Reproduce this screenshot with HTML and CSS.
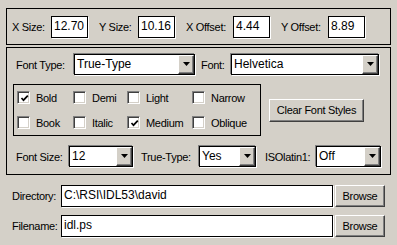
FILE: index.html
```html
<!DOCTYPE html>
<html>
<head>
<meta charset="utf-8">
<link rel="stylesheet" href="styles.css">
</head>
<body>
<div class="dialog">
  <div class="frame sizes">
    <div class="pair"><span class="lbl w39">X Size:</span><span class="field num">12.70</span></div>
    <div class="pair"><span class="lbl w39">Y Size:</span><span class="field num">10.16</span></div>
    <div class="pair"><span class="lbl w47">X Offset:</span><span class="field num">4.44</span></div>
    <div class="pair"><span class="lbl w47">Y Offset:</span><span class="field num">8.89</span></div>
  </div>

  <div class="frame fonts">
    <div class="row">
      <span class="lbl ind w58">Font Type:</span>
      <div class="combo c-type"><span class="val">True-Type</span><span class="drop"><svg width="7" height="4" viewBox="0 0 7 4"><polygon points="0,0 7,0 3.5,4" fill="#000"/></svg></span></div>
      <span class="lbl font-lbl">Font:</span>
      <div class="combo c-font"><span class="val">Helvetica</span><span class="drop"><svg width="7" height="4" viewBox="0 0 7 4"><polygon points="0,0 7,0 3.5,4" fill="#000"/></svg></span></div>
    </div>

    <div class="row styles-row">
      <div class="styles">
        <label class="chk"><span class="box on"><svg width="9" height="9" viewBox="0 0 9 9"><path d="M1.5 4 L3.5 6.2 L7.8 1.6" fill="none" stroke="#000" stroke-width="1.7"/></svg></span>Bold</label>
        <label class="chk"><span class="box"></span>Demi</label>
        <label class="chk"><span class="box"></span>Light</label>
        <label class="chk"><span class="box"></span>Narrow</label>
        <label class="chk"><span class="box"></span>Book</label>
        <label class="chk"><span class="box"></span>Italic</label>
        <label class="chk"><span class="box on"><svg width="9" height="9" viewBox="0 0 9 9"><path d="M1.5 4 L3.5 6.2 L7.8 1.6" fill="none" stroke="#000" stroke-width="1.7"/></svg></span>Medium</label>
        <label class="chk"><span class="box"></span>Oblique</label>
      </div>
      <button class="btn clear">Clear Font Styles</button>
    </div>

    <div class="row size-row">
      <span class="lbl ind w53">Font Size:</span>
      <div class="combo c-size"><span class="val">12</span><span class="drop"><svg width="7" height="4" viewBox="0 0 7 4"><polygon points="0,0 7,0 3.5,4" fill="#000"/></svg></span></div>
      <span class="lbl tt-lbl">True-Type:</span>
      <div class="combo c-tt"><span class="val">Yes</span><span class="drop"><svg width="7" height="4" viewBox="0 0 7 4"><polygon points="0,0 7,0 3.5,4" fill="#000"/></svg></span></div>
      <span class="lbl iso-lbl">ISOlatin1:</span>
      <div class="combo c-iso"><span class="val">Off</span><span class="drop"><svg width="7" height="4" viewBox="0 0 7 4"><polygon points="0,0 7,0 3.5,4" fill="#000"/></svg></span></div>
    </div>
  </div>

  <div class="files">
    <div class="frow">
      <span class="lbl w49">Directory:</span>
      <span class="field path">C:\RSI\IDL53\david</span>
      <button class="btn browse">Browse</button>
    </div>
    <div class="frow">
      <span class="lbl w49">Filename:</span>
      <span class="field path">idl.ps</span>
      <button class="btn browse">Browse</button>
    </div>
  </div>
</div>
</body>
</html>
```

FILE: styles.css
```css
html, body {
  margin: 0;
  padding: 0;
}
body {
  width: 397px;
  height: 245px;
  overflow: hidden;
  background: #d4d0c8;
  color: #000;
  font-family: "Liberation Sans", Arial, sans-serif;
  font-size: 11px;
  letter-spacing: -0.3px;
}
.dialog {
  padding: 8px 0 0 6px;
}
.frame {
  box-sizing: border-box;
  width: 385px;
  border: 1px solid #000;
}
.lbl {
  flex: none;
  white-space: nowrap;
}
.w39 { width: 39px; }
.w47 { width: 47px; }
.w49 { width: 49px; }
.w53 { width: 53px; }
.w58 { width: 58px; }
.ind { margin-left: 3px; }

/* text fields */
.field {
  box-sizing: border-box;
  height: 22px;
  border: 1px solid #000;
  box-shadow: 1px 1px 0 #fff;
  background: #fff;
  font-size: 12px;
  line-height: 18px;
  padding: 0 2px;
  white-space: nowrap;
  letter-spacing: 0;
}

/* size frame */
.sizes {
  height: 37px;
  display: flex;
  align-items: center;
  padding-left: 5px;
}
.pair {
  display: flex;
  align-items: center;
  margin-right: 11px;
}
.num {
  width: 37px;
}

/* font frame */
.fonts {
  height: 128px;
  margin-top: 2px;
  padding: 6px 0 0 6px;
}
.row {
  display: flex;
  align-items: center;
}
.combo {
  box-sizing: border-box;
  height: 21px;
  display: flex;
  border: 1px solid #000;
  box-shadow: -1px -1px 0 #808080, 1px 1px 0 #fff;
  background: #fff;
}
.combo .val {
  flex: 1;
  font-size: 12px;
  line-height: 18px;
  padding-left: 2px;
  letter-spacing: 0;
}
.drop {
  box-sizing: border-box;
  width: 16px;
  height: 19px;
  background: #d4d0c8;
  border: 1px solid;
  border-color: #fff #404040 #404040 #fff;
  box-shadow: inset -1px -1px 0 #808080;
  display: flex;
  align-items: center;
  justify-content: center;
}
.drop svg { display: block; margin-top: -1px; }
.c-type { width: 121px; }
.font-lbl { margin-left: 6px; width: 30px; }
.c-font { width: 148px; }

.styles-row {
  margin-top: 9px;
}
.styles {
  box-sizing: border-box;
  width: 248px;
  height: 52px;
  border: 1px solid #000;
  padding: 6px 0 0 3px;
  display: grid;
  grid-template-columns: 56px 54px 65px 1fr;
  grid-template-rows: 13px 13px;
  row-gap: 12px;
}
.chk {
  display: flex;
  align-items: center;
  white-space: nowrap;
}
.box {
  box-sizing: border-box;
  width: 13px;
  height: 13px;
  margin-right: 6px;
  background: #fff;
  border: 1px solid;
  border-color: #808080 #fff #fff #808080;
  box-shadow: inset 1px 1px 0 #404040, inset -1px -1px 0 #d4d0c8;
  display: flex;
  align-items: center;
  justify-content: center;
}
.box svg { display: block; margin: 1px 0 0 1px; }

.btn {
  box-sizing: border-box;
  font: inherit;
  letter-spacing: inherit;
  color: #000;
  background: #d4d0c8;
  border: 1px solid;
  border-color: #fff #404040 #404040 #fff;
  box-shadow: inset -1px -1px 0 #808080;
  padding: 0;
  margin: 0;
}
.clear {
  margin-left: 8px;
  width: 95px;
  height: 23px;
}

.size-row {
  margin-top: 10px;
}
.c-size { width: 64px; }
.tt-lbl { margin-left: 8px; width: 58px; }
.c-tt { width: 57px; }
.iso-lbl { margin-left: 9px; width: 51px; }
.c-iso { width: 65px; }

/* files */
.files {
  margin-top: 10px;
}
.frow {
  display: flex;
  align-items: center;
  margin-bottom: 8px;
}
.frow .lbl { margin-left: 6px; }
.path { width: 272px; }
.browse {
  margin-left: 2px;
  width: 50px;
  height: 22px;
}
```
